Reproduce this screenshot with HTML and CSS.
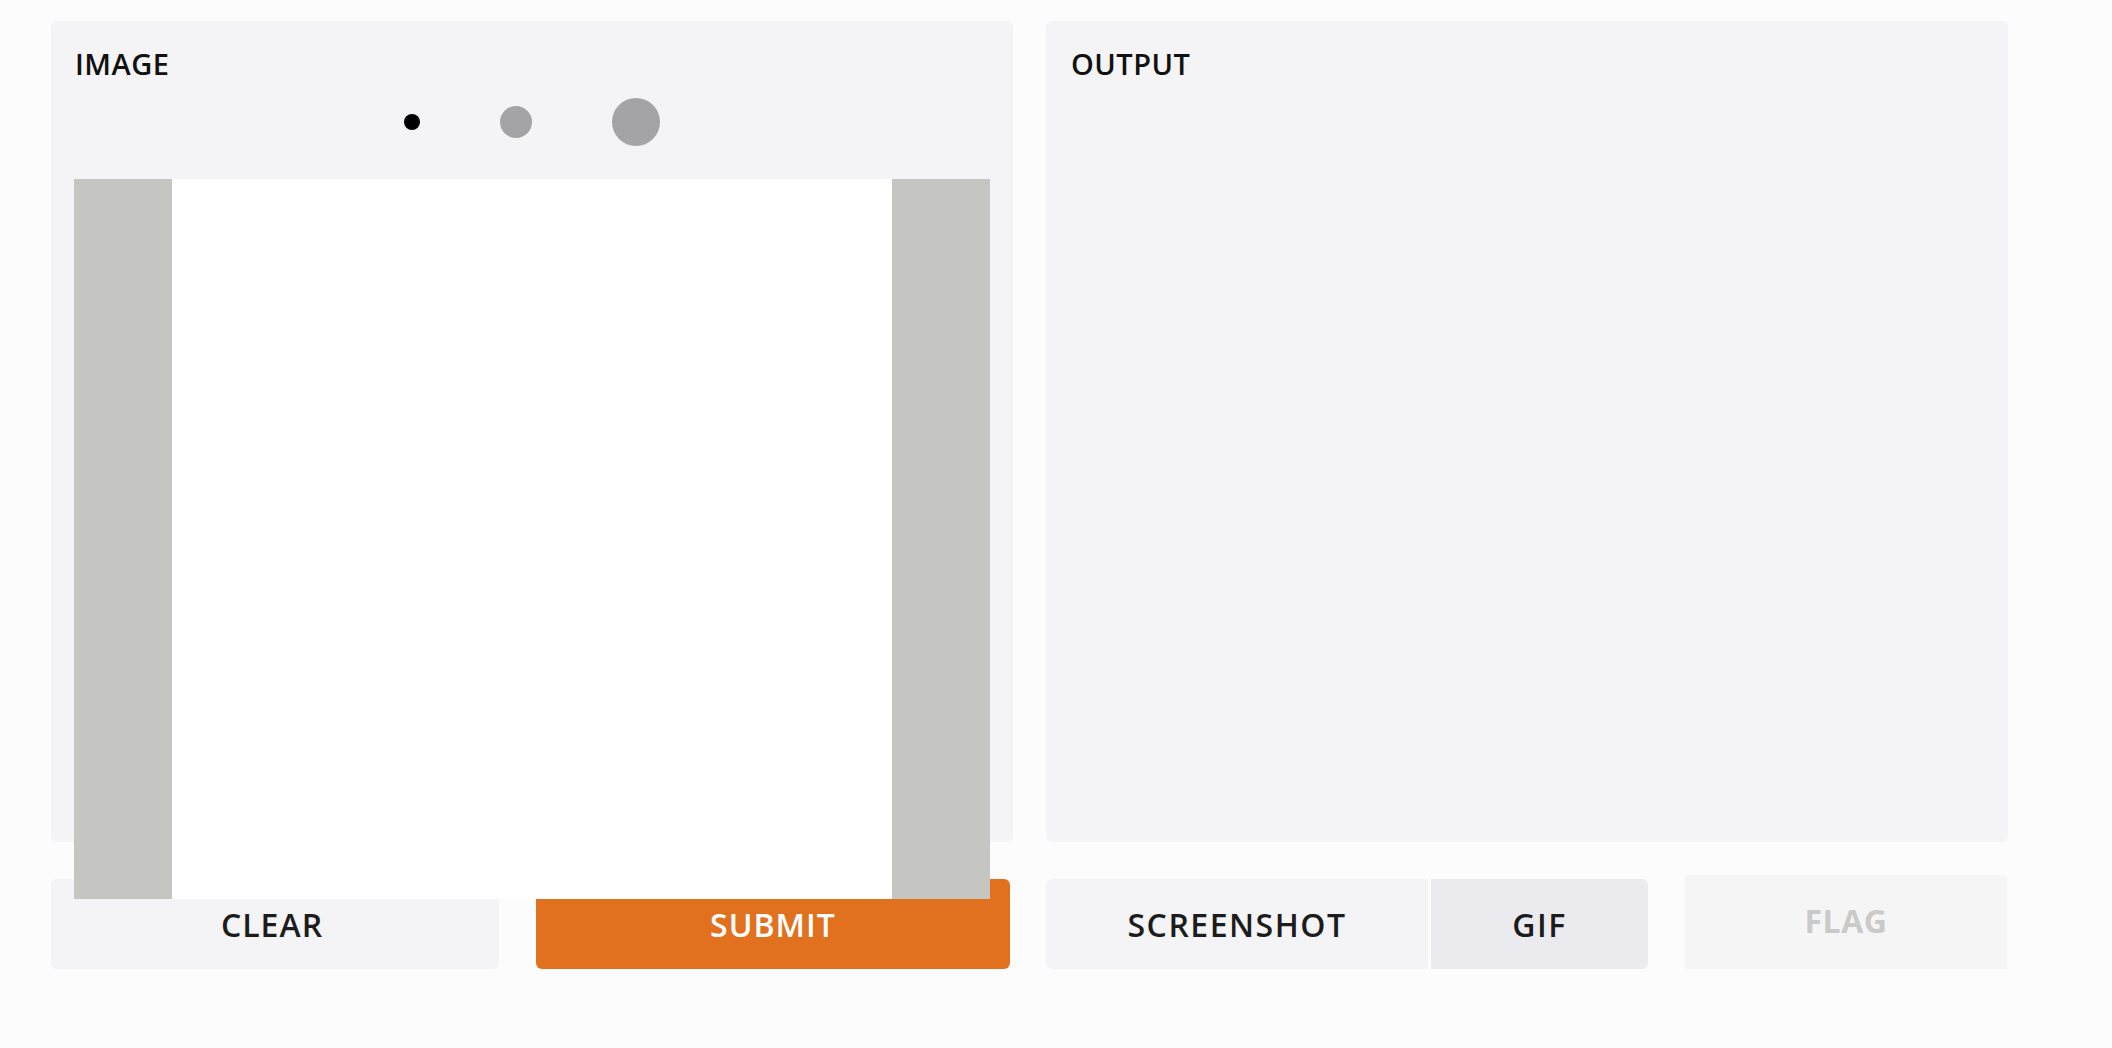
FILE: index.html
```html
<!DOCTYPE html>
<html>
<head>
<meta charset="utf-8">
<link rel="stylesheet" href="styles.css">
</head>
<body>
<div class="app">
  <div class="column">
    <div class="panel">
      <div class="label">IMAGE</div>
      <div class="toolbar">
        <span class="dot dot-s"></span>
        <span class="dot dot-m"></span>
        <span class="dot dot-l"></span>
      </div>
      <div class="canvas-wrap">
        <div class="canvas"></div>
      </div>
    </div>
    <div class="btn-row">
      <button class="btn btn-clear">CLEAR</button>
      <button class="btn btn-submit">SUBMIT</button>
    </div>
  </div>
  <div class="column">
    <div class="panel">
      <div class="label label-out">OUTPUT</div>
    </div>
    <div class="btn-row btn-row-out">
      <button class="btn btn-shot">SCREENSHOT</button>
      <button class="btn btn-gif">GIF</button>
      <button class="btn btn-flag">FLAG</button>
    </div>
  </div>
</div>
</body>
</html>
```

FILE: styles.css
```css
html, body {
  margin: 0;
  padding: 0;
  background: #fcfcfd;
  font-family: "Open Sans", "Liberation Sans", sans-serif;
}

.app {
  display: flex;
  gap: 33px;
  padding: 21px 0 0 51px;
}

.column {
  width: 962px;
  display: flex;
  flex-direction: column;
}

.panel {
  height: 821px;
  background: #f4f4f6;
  border-radius: 6px;
  padding: 23px 23px 0 23px;
  box-sizing: border-box;
  display: flex;
  flex-direction: column;
}

.panel > * {
  flex-shrink: 0;
}

.label {
  font-size: 29px;
  font-weight: 600;
  line-height: 40px;
  letter-spacing: 0.5px;
  color: #111;
  padding-left: 1px;
}

.label-out {
  padding-left: 2px;
}

.toolbar {
  height: 76px;
  margin-bottom: 19px;
  display: flex;
  align-items: center;
  justify-content: center;
  gap: 80px;
}

.dot {
  display: block;
  border-radius: 50%;
  background: #a3a3a8;
}

.dot-s {
  width: 16px;
  height: 16px;
  background: #000;
}

.dot-m {
  width: 32px;
  height: 32px;
}

.dot-l {
  width: 48px;
  height: 48px;
}

.canvas-wrap {
  position: relative;
  z-index: 2;
  height: 720px;
  background: #c5c5c1;
  display: flex;
  justify-content: center;
}

.canvas {
  width: 720px;
  height: 720px;
  background: #fefefe;
}

.btn-row {
  margin-top: 37px;
  display: flex;
  align-items: center;
  gap: 37px;
}

.btn {
  height: 90px;
  border: none;
  border-radius: 6px;
  font-family: "Open Sans", "Liberation Sans", sans-serif;
  font-size: 32px;
  font-weight: 600;
  letter-spacing: 1px;
  color: #1c1c1c;
  background: #f4f4f6;
  padding: 0;
  display: flex;
  align-items: center;
  justify-content: center;
}

.btn-clear {
  width: 448px;
  padding-right: 6px;
}

.btn-submit {
  width: 474px;
  background: #e2711f;
  color: #fff;
}

.btn-row-out {
  gap: 3px;
}

.btn-shot {
  width: 382px;
  border-radius: 6px 0 0 6px;
  letter-spacing: 1.5px;
}

.btn-gif {
  width: 217px;
  background: #ebebef;
  border-radius: 0 6px 6px 0;
  letter-spacing: 1.5px;
}

.btn-flag {
  width: 322px;
  height: 98px;
  margin: -4px 1px -4px auto;
  font-weight: 700;
  letter-spacing: 0.5px;
  color: #cacaca;
  background: #f5f5f6;
  border-radius: 4px;
  padding-bottom: 8px;
}
```
